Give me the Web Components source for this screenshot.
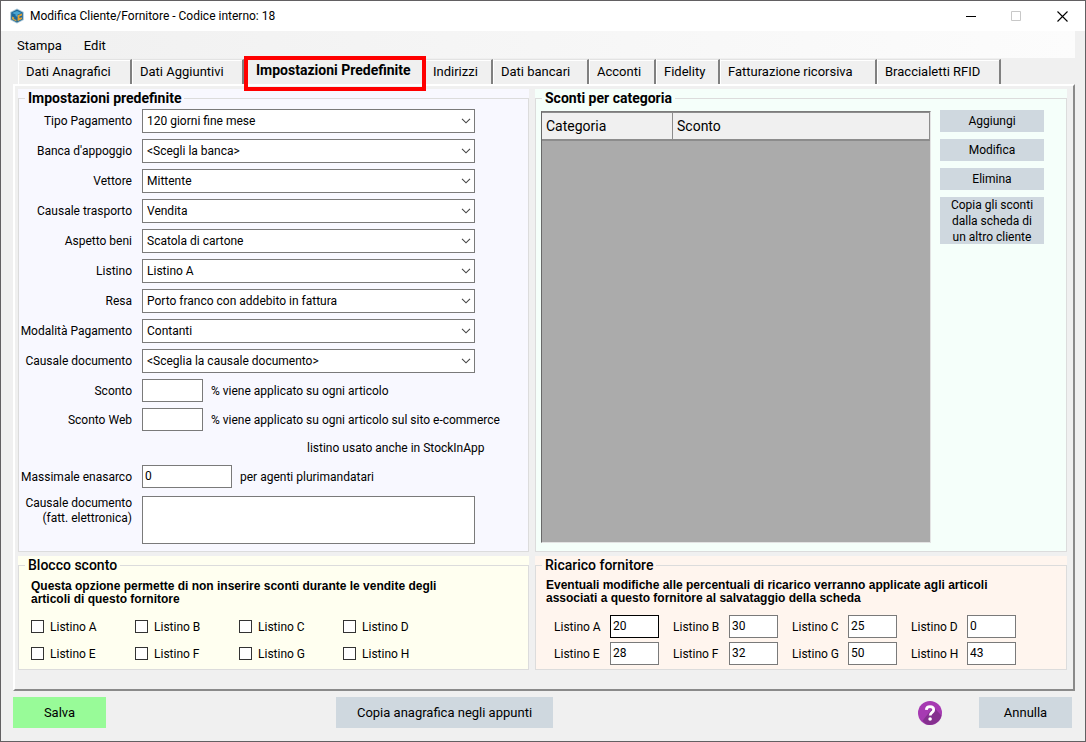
<!DOCTYPE html>
<html lang="it">
<head>
<meta charset="utf-8">
<title>Modifica Cliente/Fornitore</title>
<style>
html, body { margin: 0; }
body { font: 12px/16px Roboto, "Open Sans", sans-serif; color: #000; background: #f0f0f0; }
.boxes { display: grid; grid-template-columns: 511fr 532fr; gap: 4px 6px; }
.rows { display: grid; gap: 6px; align-content: start; padding: 1px 0 7px; }
.sconti { display: flex; gap: 9px; padding: 2px 22px 8px 5px; }
.sconti discount-table { flex: 1; margin-top: 1px; }
.actions { display: flex; flex-direction: column; gap: 7px; width: 104px; }
.note { font: bold 12px/13px "Liberation Sans", Arial, sans-serif; margin: 0; }
.blocco { padding: 5px 12px 2px; }
.blocco .grid { display: grid; grid-template-columns: repeat(4, 104px); margin-top: 7px; }
.ricarico { padding: 4px 10px 2px; }
.ricarico .grid { display: grid; grid-template-columns: repeat(4, 119px); margin: 8px 0 0 8px; }
</style>
</head>
<body>
<app-window>
  <title-bar slot="title">Modifica Cliente/Fornitore - Codice interno: 18</title-bar>
  <menu-strip slot="menu" items="Stampa|Edit"></menu-strip>
  <tab-strip slot="tabs" selected="2" tabs="Dati Anagrafici:114|Dati Aggiuntivi:112|Impostazioni Predefinite:181|Indirizzi:68|Dati bancari:96|Acconti:67|Fidelity:64|Fatturazione ricorsiva:157|Braccialetti RFID:124"></tab-strip>
  <div class="boxes">
    <group-box label="Impostazioni predefinite" strong style="--fill:#f8f8ff">
      <div class="rows">
        <select-row label="Tipo Pagamento" value="120 giorni fine mese"></select-row>
        <select-row label="Banca d'appoggio" value="&lt;Scegli la banca&gt;"></select-row>
        <select-row label="Vettore" value="Mittente"></select-row>
        <select-row label="Causale trasporto" value="Vendita"></select-row>
        <select-row label="Aspetto beni" value="Scatola di cartone"></select-row>
        <select-row label="Listino" value="Listino A"></select-row>
        <select-row label="Resa" value="Porto franco con addebito in fattura"></select-row>
        <select-row label="Modalità Pagamento" value="Contanti"></select-row>
        <select-row label="Causale documento" value="&lt;Sceglia la causale documento&gt;"></select-row>
        <input-row label="Sconto">% viene applicato su ogni articolo</input-row>
        <input-row label="Sconto Web">% viene applicato su ogni articolo sul sito e-commerce</input-row>
        <note-row>listino usato anche in StockInApp</note-row>
        <input-row label="Massimale enasarco" value="0" style="--field:90px">per agenti plurimandatari</input-row>
        <area-row label="Causale documento|(fatt. elettronica)"></area-row>
      </div>
    </group-box>
    <group-box label="Sconti per categoria" strong style="--fill:#f5fffa">
      <div class="sconti">
        <discount-table></discount-table>
        <div class="actions">
          <flat-button>Aggiungi</flat-button>
          <flat-button>Modifica</flat-button>
          <flat-button>Elimina</flat-button>
          <flat-button style="--height:47px">Copia gli sconti<br>dalla scheda di<br>un altro cliente</flat-button>
        </div>
      </div>
    </group-box>
    <group-box label="Blocco sconto" style="--fill:#fffff0">
      <div class="blocco">
        <p class="note">Questa opzione permette di non inserire sconti durante le vendite degli<br>articoli di questo fornitore</p>
        <div class="grid">
          <check-item>Listino A</check-item><check-item>Listino B</check-item><check-item>Listino C</check-item><check-item>Listino D</check-item>
          <check-item>Listino E</check-item><check-item>Listino F</check-item><check-item>Listino G</check-item><check-item>Listino H</check-item>
        </div>
      </div>
    </group-box>
    <group-box label="Ricarico fornitore" style="--fill:#fff5ee">
      <div class="ricarico">
        <p class="note">Eventuali modifiche alle percentuali di ricarico verranno applicate agli articoli<br>associati a questo fornitore al salvataggio della scheda</p>
        <div class="grid">
          <markup-item label="Listino A" value="20" active></markup-item><markup-item label="Listino B" value="30"></markup-item><markup-item label="Listino C" value="25"></markup-item><markup-item label="Listino D" value="0"></markup-item>
          <markup-item label="Listino E" value="28"></markup-item><markup-item label="Listino F" value="32"></markup-item><markup-item label="Listino G" value="50"></markup-item><markup-item label="Listino H" value="43"></markup-item>
        </div>
      </div>
    </group-box>
  </div>
  <footer-bar slot="footer">
    <flat-button slot="save" style="--height:31px;--size:13px;--bg:#98fb98">Salva</flat-button>
    <flat-button slot="copy" style="--height:31px;--size:13px">Copia anagrafica negli appunti</flat-button>
    <help-button slot="help"></help-button>
    <flat-button slot="cancel" style="--height:31px;--size:13px">Annulla</flat-button>
  </footer-bar>
</app-window>

<script>
const esc = s => (s || '').replace(/&/g, '&amp;').replace(/</g, '&lt;').replace(/>/g, '&gt;').replace(/"/g, '&quot;');

const base = `*{box-sizing:border-box}
button,input,select,textarea{font:inherit;color:inherit;margin:0;border-radius:0;outline:0}
input,textarea,select{background:#fff;border:1px solid #7a7a7a}`;

function define(name, render) {
  customElements.define(name, class extends HTMLElement {
    connectedCallback() {
      if (this.shadowRoot) return;
      this.attachShadow({ mode: 'open' }).innerHTML = render(this);
    }
  });
}

const rowStyle = `${base}
:host{display:flex;align-items:center;min-width:0}
label{flex:none;width:113px;margin-right:10px;display:flex;flex-direction:column;align-items:flex-end;white-space:nowrap}`;

define('app-window', () => `<style>${base}
:host{display:flex;flex-direction:column;min-height:100vh;box-sizing:border-box;border:1px solid #626062;background:#f0f0f0}
main{flex:1;margin:0 10px 0 12px;padding:3px 6px 18px 3px;border:2px solid;border-color:#fff #8a8a8a #8a8a8a #fff}
</style><slot name="title"></slot><slot name="menu"></slot><slot name="tabs"></slot><main><slot></slot></main><slot name="footer"></slot>`);

define('title-bar', () => `<style>${base}
:host{display:flex;align-items:center;height:30px;background:#fff;padding-left:8px}
h1{flex:1;margin:0 0 0 5px;font:inherit}
button{width:46px;height:30px;padding:0;border:0;background:none;display:grid;place-items:center}
svg{display:block}
</style>
<svg width="16" height="16" viewBox="0 0 16 16" aria-hidden="true">
<path d="M8 0.5L14.8 4V12L8 15.5L1.2 12V4Z" fill="#a9c6d6"/>
<path d="M8 1.6L13.8 4.6V11.4L8 14.4L2.2 11.4V4.6Z" fill="#1d6798"/>
<path d="M3 5L8 3L12.6 5L8.6 6.6V9L6.6 8V6.6Z" fill="#49a5d1"/>
<path d="M8.6 7.2L13 5.6V7.4L10.4 8.4V10L13 9.2V11L8.6 13.2Z" fill="#e2a032"/>
<path d="M3 8.4L5.2 9.6V11L7.4 12V13.6L3 11.2Z" fill="#c9a249"/>
</svg>
<h1><slot></slot></h1>
<button aria-label="Riduci a icona"><svg width="11" height="11"><path d="M1 5.5H11" stroke="#000"/></svg></button>
<button aria-label="Ingrandisci" disabled><svg width="11" height="11"><path d="M.5 .5H9.5V9.5H.5Z" fill="none" stroke="#c8c8c8"/></svg></button>
<button aria-label="Chiudi"><svg width="11" height="11"><path d="M.5 .5L10.5 10.5M10.5 .5L.5 10.5" stroke="#000" stroke-width="1.1"/></svg></button>`);

define('menu-strip', el => `<style>${base}
:host{display:flex;height:27px;padding-left:10px;margin-right:10px;gap:10px;background:linear-gradient(90deg,#f0f0f0,#fcfcfc)}
button{border:0;background:none;padding:2px 6px 0;font-size:13px}
</style>${el.getAttribute('items').split('|').map(t => `<button>${esc(t)}</button>`).join('')}`);

define('tab-strip', el => `<style>${base}
:host{display:flex;height:25px;padding:1px 0 0 17px}
button{flex:none;position:relative;border:1px solid;border-color:#e3e3e3 #f0f0f0 #f0f0f0 #fff;border-bottom:0;border-right:2px solid #808080;background:#f0f0f0;padding:0 0 0 7px;text-align:left;font-size:13px;white-space:nowrap;box-shadow:inset 0 1px #fff}
button.on{z-index:1;font-size:14px;font-weight:bold;padding:0 0 4px 11px;border-color:transparent;box-shadow:none}
button.on::after{content:"";position:absolute;inset:-4px -3px -7px -1px;border:4px solid #f00}
</style>${el.getAttribute('tabs').split('|').map((t, i) => {
  const [name, width] = t.split(':');
  return `<button role="tab" class="${i == el.getAttribute('selected') ? 'on' : ''}" style="width:${width}px">${esc(name)}</button>`;
}).join('')}`);

define('group-box', el => `<style>${base}
:host{display:grid;min-width:0;background:var(--fill)}
fieldset{display:grid;min-width:0;margin:0;padding:0;border:1px solid #dcdcdc}
legend{margin-left:6px;padding:0 3px;font-size:14px;line-height:19px;font-weight:${el.hasAttribute('strong') ? 'bold' : '500'}}
</style><fieldset><legend>${esc(el.getAttribute('label'))}</legend><slot></slot></fieldset>`);

define('select-row', el => `<style>${rowStyle}
:host{padding-right:53px}
div{flex:1;display:grid;min-width:0}
select,svg{grid-area:1/1}
select{appearance:none;width:100%;height:24px;padding:0 20px 1px 4px}
svg{place-self:center end;margin-right:4px;pointer-events:none}
</style><label for="f">${esc(el.getAttribute('label'))}</label>
<div><select id="f"><option>${esc(el.getAttribute('value'))}</option></select>
<svg width="10" height="6" viewBox="0 0 10 6"><path d="M1 .8L5 4.8L9 .8" fill="none" stroke="#444" stroke-width="1.1"/></svg></div>`);

define('input-row', el => `<style>${rowStyle}
input{width:var(--field,61px);height:23px;padding:0 2px 2px}
span{margin-left:8px;white-space:nowrap}
</style><label for="f">${esc(el.getAttribute('label'))}</label><input id="f" value="${esc(el.getAttribute('value'))}"><span><slot></slot></span>`);

define('note-row', () => `<style>
:host{display:block;line-height:22px;padding-left:288px;white-space:nowrap}
</style><slot></slot>`);

define('area-row', el => `<style>${rowStyle}
:host{align-items:flex-start;padding:2px 53px 0 0}
label{line-height:15px}
textarea{flex:1;min-width:0;height:48px;resize:none;padding:2px}
</style><label for="f">${el.getAttribute('label').split('|').map(t => `<span>${esc(t)}</span>`).join('')}</label><textarea id="f"></textarea>`);

define('flat-button', () => `<style>${base}
:host{display:block}
button{display:block;width:100%;height:var(--height,22px);border:0;padding:0;background:var(--bg,#cfd8df);font-size:var(--size,12px);line-height:16px}
</style><button><slot></slot></button>`);

define('discount-table', () => `<style>${base}
:host{display:block;box-sizing:border-box;background:#ababab;border:1px solid;border-color:#7c7c7c #e3e3e3 #e3e3e3 #696969}
table{width:100%;border-collapse:separate;border-spacing:0;table-layout:fixed}
th{height:29px;padding:0 4px;text-align:left;font:14px/16px Roboto,sans-serif;background:#f0f0f0;border:1px solid #8c8c8c;border-width:1px 1px 2px 0}
th:first-child{width:131px}
</style><table><thead><tr><th scope="col">Categoria</th><th scope="col">Sconto</th></tr></thead><tbody></tbody></table>`);

define('check-item', () => `<style>${base}
:host{display:block}
label{display:flex;align-items:center;gap:6px;height:27px}
input{appearance:none;width:13px;height:13px;border-color:#333}
input:checked{background:#333}
</style><label><input type="checkbox"><slot></slot></label>`);

define('markup-item', el => `<style>${base}
:host{display:flex;align-items:center;height:27px}
label{width:56px}
input{width:49px;height:23px;padding:0 2px 2px}
:host([active]) input{border-color:#000}
</style><label for="f">${esc(el.getAttribute('label'))}</label><input id="f" value="${esc(el.getAttribute('value'))}">`);

define('footer-bar', () => `<style>
:host{display:grid;grid-template-columns:93px 230fr 217px 365fr 24px 37px 93px;align-items:center;padding:6px 13px 13px 12px}
slot[name=copy]::slotted(*){grid-column:3}
slot[name=help]::slotted(*){grid-column:5}
slot[name=cancel]::slotted(*){grid-column:7}
</style><slot name="save"></slot><slot name="copy"></slot><slot name="help"></slot><slot name="cancel"></slot>`);

define('help-button', () => `<style>
:host{display:block}
button{display:block;width:24px;height:24px;border:0;padding:0;background:none}
svg{display:block}
</style><button aria-label="Aiuto"><svg width="24" height="24" viewBox="0 0 24 24">
<circle cx="12" cy="12" r="12" fill="#a63ab2"/>
<path d="M15.5 6L23.4 14.5A12 12 0 0 1 8 23.3L4.5 19.8Z" fill="#85308f"/>
<path d="M8.3 8.8C8.5 6.6 10 5.6 12 5.6C14.2 5.6 15.7 6.8 15.7 8.7C15.7 11.4 12.2 11.4 12.2 14.6" fill="none" stroke="#fff" stroke-width="2.8"/>
<circle cx="12.1" cy="18" r="1.8" fill="#fff"/></svg></button>`);
</script>
</body>
</html>
